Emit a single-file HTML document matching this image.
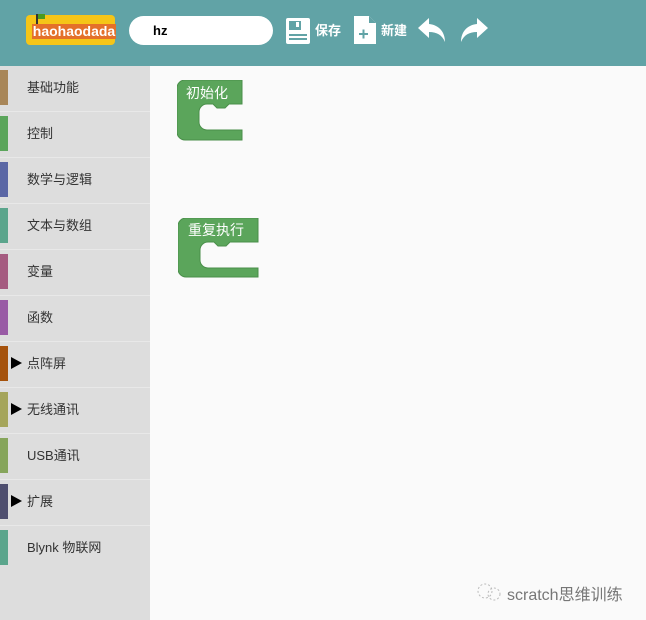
<!DOCTYPE html>
<html><head><meta charset="utf-8"><style>
*{margin:0;padding:0;box-sizing:border-box}
body{width:646px;height:620px;overflow:hidden;background:#fafafa;font-family:"Liberation Sans","Noto Sans CJK SC",sans-serif;position:relative}
.top{position:absolute;left:0;top:0;width:646px;height:66px;background:#61a3a6}
.side{position:absolute;left:0;top:66px;width:150px;height:554px;background:#dddddd}
.item{position:absolute;left:0;width:150px;height:46px;border-bottom:1px solid #e8e8e8;font-size:13px;color:#333}
.item .bar{position:absolute;left:0;top:4px;width:8px;height:35px}
.item .t{position:absolute;left:27px;top:11px}
.item .tri{position:absolute;left:11px;top:15px;width:0;height:0;border-left:11px solid #000;border-top:6px solid transparent;border-bottom:6px solid transparent}
.blk{position:absolute}
.lbl{position:absolute;color:#fff;font-size:14px}
</style></head><body>
<div class="top">
  <div style="position:absolute;left:26px;top:15px;width:89px;height:30px;background:#f5c518;border-radius:4px"></div>
  <div style="position:absolute;left:36px;top:14px;width:2px;height:12px;background:#333"></div>
  <div style="position:absolute;left:38px;top:14px;width:7px;height:5px;background:#4a9a20"></div>
  <div style="position:absolute;left:32px;top:24px;width:84px;height:15px;background:#e4702a;color:#fff;font-size:14px;font-weight:bold;line-height:15px;text-align:center">haohaodada</div>
  <div style="position:absolute;left:129px;top:16px;width:144px;height:29px;background:#fff;border-radius:15px;font-size:13px;font-weight:bold;line-height:29px;padding-left:24px;color:#000">hz</div>
  <svg style="position:absolute;left:285px;top:17px" width="26" height="28" viewBox="0 0 26 28"><rect x="1" y="1" width="24" height="26" rx="2" fill="#fff"/><rect x="4" y="4" width="12" height="9" fill="#61a3a6"/><rect x="11" y="5" width="3" height="5" fill="#fff"/><rect x="4" y="17" width="18" height="2" fill="#61a3a6"/><rect x="4" y="21" width="18" height="2" fill="#61a3a6"/></svg>
  <div style="position:absolute;left:315px;top:20px;color:#fff;font-size:13px;font-weight:bold">保存</div>
  <svg style="position:absolute;left:354px;top:16px" width="22" height="28" viewBox="0 0 22 28"><path d="M0 0H15L22 7V28H0Z" fill="#fff"/><path d="M15 0V7H22" fill="#61a3a6"/><path d="M5 18H14M9.5 13.5V22.5" stroke="#61a3a6" stroke-width="2"/></svg>
  <div style="position:absolute;left:381px;top:20px;color:#fff;font-size:13px;font-weight:bold">新建</div>
  <svg style="position:absolute;left:417px;top:17px" width="30" height="26" viewBox="0 0 30 26"><path d="M12 1L1 11L12 21V15C20 15 25 18 28 25C28 15 22 8 12 7Z" fill="#fff"/></svg>
  <svg style="position:absolute;left:459px;top:17px" width="30" height="26" viewBox="0 0 30 26"><path d="M18 1L29 11L18 21V15C10 15 5 18 2 25C2 15 8 8 18 7Z" fill="#fff"/></svg>
</div>
<div class="side">
  <div class="item" style="top:0"><div class="bar" style="background:#a88658"></div><div class="t">基础功能</div></div>
  <div class="item" style="top:46px"><div class="bar" style="background:#5ba55b"></div><div class="t">控制</div></div>
  <div class="item" style="top:92px"><div class="bar" style="background:#5b67a5"></div><div class="t">数学与逻辑</div></div>
  <div class="item" style="top:138px"><div class="bar" style="background:#5ba58c"></div><div class="t">文本与数组</div></div>
  <div class="item" style="top:184px"><div class="bar" style="background:#a55b80"></div><div class="t">变量</div></div>
  <div class="item" style="top:230px"><div class="bar" style="background:#995ba5"></div><div class="t">函数</div></div>
  <div class="item" style="top:276px"><div class="bar" style="background:#a5520c"></div><div class="tri"></div><div class="t">点阵屏</div></div>
  <div class="item" style="top:322px"><div class="bar" style="background:#a5a55b"></div><div class="tri"></div><div class="t">无线通讯</div></div>
  <div class="item" style="top:368px"><div class="bar" style="background:#86a55b"></div><div class="t">USB通讯</div></div>
  <div class="item" style="top:414px"><div class="bar" style="background:#4f4f6f"></div><div class="tri"></div><div class="t">扩展</div></div>
  <div class="item" style="top:460px;border:none"><div class="bar" style="background:#5ba58c"></div><div class="t">Blynk 物联网</div></div>
</div>
<svg class="blk" style="left:177px;top:80px" width="66" height="61"><path d="M0 8A8 8 0 0 1 8 0H65V24H52L48 28H40L36 24H30A8 8 0 0 0 22 32V42A8 8 0 0 0 30 50H65V60H8A8 8 0 0 1 0 52Z" fill="#5ba55b" stroke="#4a8f4a" stroke-width="1"/></svg>
<div class="lbl" style="left:186px;top:83px">初始化</div>
<svg class="blk" style="left:178px;top:218px" width="81" height="60"><path d="M0 8A8 8 0 0 1 8 0H80V24H52L48 28H40L36 24H30A8 8 0 0 0 22 32V42A8 8 0 0 0 30 50H80V59H8A8 8 0 0 1 0 51Z" fill="#5ba55b" stroke="#4a8f4a" stroke-width="1"/></svg>
<div class="lbl" style="left:188px;top:220px">重复执行</div>
<svg style="position:absolute;left:476px;top:582px" width="28" height="20"><circle cx="9" cy="9" r="7" fill="none" stroke="#bbb" stroke-dasharray="2 2"/><circle cx="18" cy="12" r="6" fill="none" stroke="#bbb" stroke-dasharray="2 2"/></svg>
<div style="position:absolute;left:507px;top:581px;font-size:16px;color:#777">scratch思维训练</div>
</body></html>
